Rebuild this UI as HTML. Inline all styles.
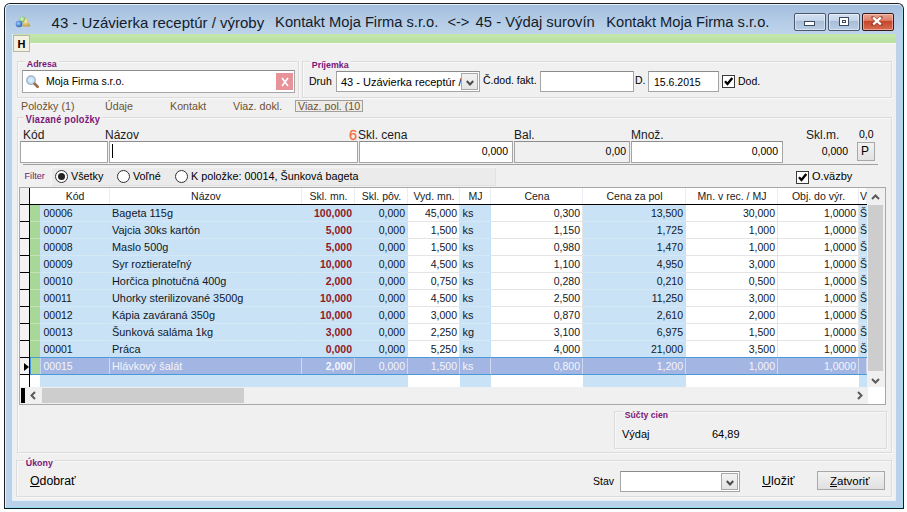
<!DOCTYPE html>
<html><head><meta charset="utf-8">
<style>
*{box-sizing:border-box;margin:0;padding:0}
html,body{width:907px;height:512px;overflow:hidden;background:#fefefe;font-family:"Liberation Sans",sans-serif;color:#000}
.a{position:absolute}
svg{display:block}
.t{position:absolute;white-space:nowrap;line-height:1}
#win{left:4px;top:3px;width:900px;height:506px;border:1px solid #1a1e22;border-bottom-color:#0a1a1a;border-radius:6px 6px 0 0;background:#b9d1ea;overflow:hidden}
#winin{left:0;top:0;width:898px;height:504px;border:1px solid #eaf2fa;border-bottom-color:#94dcf4;border-right-color:#a8d8ee;border-radius:5px 5px 0 0;
 background:linear-gradient(#a3bede 0px,#b2cae4 14px,#bcd3ea 28px,#bad1ea 100%)}
#client{left:12px;top:34px;width:884px;height:467px;background:#f0f0f0;border-bottom:1px solid #e6eef6;border-left:1px solid #e4f0f8}
.grp{position:absolute;border:1px solid #dcdcdc;box-shadow:inset 1px 1px 0 #f8f8f8, 1px 1px 0 #f8f8f8}
.glab{position:absolute;font-weight:bold;font-size:9.6px;color:#7a167a;background:#f0f0f0;padding:0 2px;line-height:10px;white-space:nowrap;transform:scaleX(0.92);transform-origin:0 0}
.inp{position:absolute;background:#fff;border:1px solid #a5a5a5;border-top-color:#8c8c8c}
.lbl{position:absolute;font-size:10.5px;white-space:nowrap;line-height:1}
.big{position:absolute;font-size:12px;white-space:nowrap;line-height:1;color:#1a1a1a}
.g{position:absolute;font-size:10.5px;white-space:nowrap;line-height:1;color:#101828}
.gr{text-align:right}
</style></head><body>
<div id="win" class="a"><div id="winin" class="a"></div></div>
<div class="a" style="left:15px;top:15px;width:16px;height:14px"><svg width="16" height="14" viewBox="0 0 16 14"><defs><radialGradient id="gb" cx="0.4" cy="0.4" r="0.6"><stop offset="0" stop-color="#9fd0ff"/><stop offset="1" stop-color="#2a64b0"/></radialGradient><radialGradient id="gy" cx="0.4" cy="0.4" r="0.6"><stop offset="0" stop-color="#fff0b0"/><stop offset="1" stop-color="#c8a040"/></radialGradient><radialGradient id="gg" cx="0.4" cy="0.4" r="0.6"><stop offset="0" stop-color="#e0ffd0"/><stop offset="1" stop-color="#70b060"/></radialGradient></defs><circle cx="7.5" cy="4.5" r="3" fill="url(#gg)"/><circle cx="4" cy="9" r="3.3" fill="url(#gb)"/><path d="M11 2.5 L15.5 11.5 L7 11.5 Z" fill="url(#gy)"/></svg></div>
<div class="t" style="left:51.6px;top:15px;font-size:15px;color:#141c2c">43 - Uzávierka receptúr / výroby</div>
<div class="t" style="left:275.1px;top:15px;font-size:14.7px;color:#141c2c">Kontakt Moja Firma s.r.o.</div>
<div class="t" style="left:447.4px;top:15px;font-size:14.7px;color:#141c2c">&lt;-&gt;</div>
<div class="t" style="left:475.6px;top:15px;font-size:14.8px;color:#141c2c">45 - Výdaj surovín</div>
<div class="t" style="left:606.2px;top:15px;font-size:14.7px;color:#141c2c">Kontakt Moja Firma s.r.o.</div>
<div class="a" style="left:794px;top:13px;width:32px;height:18px;border:1px solid #4a5870;border-radius:2px;box-shadow:inset 0 0 0 1px rgba(255,255,255,0.45);background:linear-gradient(#d3e0f0 0,#c6d6ea 40%,#a8bed8 45%,#b8cce4 100%)"></div>
<div class="a" style="left:804px;top:21px;width:11px;height:5px;background:#fff;border:1px solid #3a4a60"></div>
<div class="a" style="left:828px;top:13px;width:32px;height:18px;border:1px solid #4a5870;border-radius:2px;box-shadow:inset 0 0 0 1px rgba(255,255,255,0.45);background:linear-gradient(#d3e0f0 0,#c6d6ea 40%,#a8bed8 45%,#b8cce4 100%)"></div>
<div class="a" style="left:839px;top:17px;width:10px;height:9px;background:#fff;border:1px solid #3a4a60"><div class="a" style="left:2px;top:2px;width:4px;height:3px;border:1px solid #3a4a60"></div></div>
<div class="a" style="left:862px;top:13px;width:32px;height:18px;border:1px solid #3a1a18;border-radius:2px;box-shadow:inset 0 0 0 1px rgba(255,220,210,0.5);background:linear-gradient(#eaa595 0,#e0806a 40%,#c6442a 45%,#d86c52 100%)"></div>
<div class="a" style="left:871px;top:16px"><svg width="12" height="10" viewBox="0 0 12 10"><path d="M2 1.5 L10 8.5 M10 1.5 L2 8.5" stroke="#7a3a2a" stroke-width="3.6" stroke-linecap="square" opacity="0.55"/><path d="M2.2 1.7 L9.8 8.3 M9.8 1.7 L2.2 8.3" stroke="#fff" stroke-width="2.2"/></svg></div>
<div id="client" class="a"></div>
<div class="a" style="left:13px;top:34px;width:883px;height:9px;background:linear-gradient(#c4e6ac,#bae0a2)"></div>
<div class="a" style="left:13px;top:43px;width:883px;height:1px;background:#f6f8f2"></div>
<div class="a" style="left:13px;top:35px;width:17px;height:17px;background:#f3f1e0;border:1px solid #b8b8a8"></div>
<div class="t" style="left:17.5px;top:39px;font-size:11px;font-weight:bold">H</div>
<div class="grp" style="left:17px;top:61px;width:282px;height:37px"></div>
<div class="glab" style="left:25px;top:58.5px">Adresa</div>
<div class="inp" style="left:22px;top:70px;width:273px;height:23px"></div>
<div class="a" style="left:26px;top:75px"><svg width="14" height="14" viewBox="0 0 14 14"><defs><radialGradient id="lens" cx="0.5" cy="0.5" r="0.5"><stop offset="0" stop-color="#e8f4ff"/><stop offset="1" stop-color="#b8d4f0"/></radialGradient></defs><circle cx="5" cy="5.2" r="4.3" fill="url(#lens)" stroke="#9ab2ca" stroke-width="1.2"/><path d="M8.6 8.8 L11.6 11.8" stroke="#9a7048" stroke-width="2.8" stroke-linecap="round"/></svg></div>
<div class="lbl" style="left:46px;top:76px">Moja Firma s.r.o.</div>
<div class="a" style="left:276px;top:73px;width:17px;height:17px;background:#e8929a"></div>
<div class="a" style="left:281px;top:77px"><svg width="8" height="10" viewBox="0 0 8 10"><path d="M1 1 L7 9 M7 1 L1 9" stroke="#fff" stroke-width="1.6"/></svg></div>
<div class="grp" style="left:302px;top:61px;width:590px;height:37px"></div>
<div class="glab" style="left:310px;top:60px">Príjemka</div>
<div class="lbl" style="left:309px;top:76px">Druh</div>
<div class="inp" style="left:336px;top:71px;width:144px;height:21px;overflow:hidden"><div class="t" style="left:4px;top:5px;font-size:11px">43 - Uzávierka receptúr /</div></div>
<div class="a" style="left:461px;top:73px;width:17px;height:17px;background:linear-gradient(#f2f2f2,#e4e4e4);border:1px solid #a8a8a8"></div><div class="a" style="left:466px;top:80px"><svg width="8" height="6" viewBox="0 0 8 6"><path d="M0.8 1 L4 4.5 L7.2 1" fill="none" stroke="#4a4a4a" stroke-width="2"/></svg></div>
<div class="lbl" style="left:483px;top:75px">Č.dod. fakt.</div>
<div class="inp" style="left:540px;top:71px;width:94px;height:21px"></div>
<div class="lbl" style="left:635px;top:75px">D.</div>
<div class="inp" style="left:648px;top:71px;width:71px;height:21px"></div>
<div class="lbl" style="left:654px;top:77px">15.6.2015</div>
<div class="a" style="left:722px;top:75px;width:13px;height:13px;background:#fff;border:1px solid #3a3a3a"></div><div class="a" style="left:724px;top:77px"><svg width="9" height="9" viewBox="0 0 9 9"><path d="M1 4.3 L3.5 7 L8.3 1" fill="none" stroke="#000" stroke-width="2.4"/></svg></div>
<div class="lbl" style="left:738px;top:76px">Dod.</div>
<div class="lbl" style="left:21px;top:101px;color:#6e5030;font-size:10.7px">Položky (1)</div>
<div class="lbl" style="left:105px;top:101px;color:#6e5030;font-size:10.7px">Údaje</div>
<div class="lbl" style="left:170px;top:101px;color:#6e5030;font-size:10.7px">Kontakt</div>
<div class="lbl" style="left:233px;top:101px;color:#6e5030;font-size:10.7px">Viaz. dokl.</div>
<div class="a" style="left:295px;top:100px;width:68px;height:12px;border:1px solid #a0a0a0;background:#eeebe6;overflow:hidden"><div class="lbl" style="left:2px;top:0px;color:#6e5030;font-size:10.7px">Viaz. pol. (10</div></div>
<div class="grp" style="left:17px;top:117px;width:875px;height:336px"></div>
<div class="glab" style="left:24px;top:114.5px;font-size:10px;letter-spacing:0.25px">Viazané položky</div>
<div class="big" style="left:23px;top:129px">Kód</div>
<div class="big" style="left:105px;top:129px">Názov</div>
<div class="big" style="left:358px;top:129px">Skl. cena</div>
<div class="big" style="left:514px;top:129px">Bal.</div>
<div class="big" style="left:631px;top:129px">Množ.</div>
<div class="big" style="left:806px;top:129px">Skl.m.</div>
<div class="t" style="left:349px;top:127.5px;font-size:14.6px;color:#f07048;-webkit-text-stroke:0.3px #f07048">6</div>
<div class="lbl" style="left:859px;top:129px">0,0</div>
<div class="inp" style="left:20px;top:141px;width:88px;height:22px"></div>
<div class="inp" style="left:109px;top:141px;width:249px;height:22px"></div>
<div class="a" style="left:112px;top:144px;width:1px;height:14px;background:#000"></div>
<div class="inp" style="left:359px;top:141px;width:154px;height:22px"></div>
<div class="lbl" style="left:359px;top:146px;width:149px;text-align:right">0,000</div>
<div class="inp" style="left:514px;top:141px;width:116px;height:22px;background:#f0f0f0"></div>
<div class="lbl" style="left:514px;top:146px;width:112px;text-align:right">0,00</div>
<div class="inp" style="left:631px;top:141px;width:152px;height:22px"></div>
<div class="lbl" style="left:631px;top:146px;width:147px;text-align:right">0,000</div>
<div class="lbl" style="left:790px;top:146px;width:58px;text-align:right">0,000</div>
<div class="a" style="left:857px;top:142px;width:18px;height:19px;background:linear-gradient(#f2f2f2,#e2e2e2);border:1px solid #a8a8a8"></div>
<div class="t" style="left:861px;top:145px;font-size:12px">P</div>
<div class="a" style="left:23px;top:164px;width:855px;height:1px;background:#a0a0a0"></div>
<div class="t" style="left:24.5px;top:172px;font-size:9.2px;color:#6c1c6c">Filter</div>
<div class="a" style="left:51px;top:167px;width:445px;height:19px;background:#ebebeb;border:1px solid #e2e2e2;border-top-color:#f6f6f6;border-left-color:#f6f6f6"></div>
<div class="a" style="left:55px;top:170px;width:13px;height:13px;border-radius:50%;background:#fff;border:1.4px solid #303030"></div>
<div class="a" style="left:58px;top:173px;width:7px;height:7px;border-radius:50%;background:#222"></div>
<div class="t" style="left:71px;top:171px;font-size:10.8px">Všetky</div>
<div class="a" style="left:117px;top:170px;width:13px;height:13px;border-radius:50%;background:#fff;border:1.4px solid #303030"></div>
<div class="t" style="left:133px;top:171px;font-size:10.8px">Voľné</div>
<div class="a" style="left:175px;top:170px;width:13px;height:13px;border-radius:50%;background:#fff;border:1.4px solid #303030"></div>
<div class="t" style="left:191px;top:171px;font-size:10.8px">K položke: 00014, Šunková bageta</div>
<div class="a" style="left:796px;top:171px;width:13px;height:13px;background:#fff;border:1px solid #3a3a3a"></div><div class="a" style="left:798px;top:173px"><svg width="9" height="9" viewBox="0 0 9 9"><path d="M1 4.3 L3.5 7 L8.3 1" fill="none" stroke="#000" stroke-width="2.4"/></svg></div>
<div class="t" style="left:812px;top:171px;font-size:11px">O.väzby</div>
<div class="a" style="left:19px;top:187px;width:867px;height:218px;border:1px solid #a8a8a8;background:#fff"></div>
<div class="a" style="left:20px;top:188px;width:9px;height:16px;background:#f0f0f0"></div>
<div class="a" style="left:40px;top:188px;width:70px;height:16px;border-right:1px solid #e8eef4"></div>
<div class="g" style="left:40px;top:191px;width:70px;text-align:center;color:#1a1a1a">Kód</div>
<div class="a" style="left:110px;top:188px;width:192px;height:16px;border-right:1px solid #e8eef4"></div>
<div class="g" style="left:110px;top:191px;width:192px;text-align:center;color:#1a1a1a">Názov</div>
<div class="a" style="left:302px;top:188px;width:53px;height:16px;border-right:1px solid #e8eef4"></div>
<div class="g" style="left:302px;top:191px;width:53px;text-align:center;color:#1a1a1a">Skl. mn.</div>
<div class="a" style="left:355px;top:188px;width:53px;height:16px;border-right:1px solid #e8eef4"></div>
<div class="g" style="left:355px;top:191px;width:53px;text-align:center;color:#1a1a1a">Skl. pôv.</div>
<div class="a" style="left:408px;top:188px;width:52px;height:16px;border-right:1px solid #e8eef4"></div>
<div class="g" style="left:408px;top:191px;width:52px;text-align:center;color:#1a1a1a">Vyd. mn.</div>
<div class="a" style="left:460px;top:188px;width:31px;height:16px;border-right:1px solid #e8eef4"></div>
<div class="g" style="left:460px;top:191px;width:31px;text-align:center;color:#1a1a1a">MJ</div>
<div class="a" style="left:491px;top:188px;width:92px;height:16px;border-right:1px solid #e8eef4"></div>
<div class="g" style="left:491px;top:191px;width:92px;text-align:center;color:#1a1a1a">Cena</div>
<div class="a" style="left:583px;top:188px;width:103px;height:16px;border-right:1px solid #e8eef4"></div>
<div class="g" style="left:583px;top:191px;width:103px;text-align:center;color:#1a1a1a">Cena za pol</div>
<div class="a" style="left:686px;top:188px;width:92px;height:16px;border-right:1px solid #e8eef4"></div>
<div class="g" style="left:686px;top:191px;width:92px;text-align:center;color:#1a1a1a">Mn. v rec. / MJ</div>
<div class="a" style="left:778px;top:188px;width:81px;height:16px;border-right:1px solid #e8eef4"></div>
<div class="g" style="left:778px;top:191px;width:81px;text-align:center;color:#1a1a1a">Obj. do výr.</div>
<div class="a" style="left:859px;top:188px;width:8px;height:16px;border-right:1px solid #e8eef4"></div>
<div class="g" style="left:860px;top:191px">V</div>
<div class="a" style="left:20px;top:204px;width:847px;height:1px;background:#000"></div>
<div class="a" style="left:20px;top:205px;width:9px;height:16px;background:#f4f2f2"></div>
<div class="a" style="left:20px;top:221px;width:9px;height:1px;background:#000"></div>
<div class="a" style="left:30px;top:205px;width:10px;height:17px;background:#a8d898;border-bottom:1px solid #c4e4b8"></div>
<div class="a" style="left:40px;top:205px;width:70px;height:17px;background:#c9e2f5;border-right:1px solid #c6e0f4;border-bottom:1px solid #d4e8f6"></div>
<div class="g" style="left:43.5px;top:208px;color:#101828;font-weight:normal;font-size:10.5px">00006</div>
<div class="a" style="left:110px;top:205px;width:192px;height:17px;background:#c9e2f5;border-right:1px solid #c6e0f4;border-bottom:1px solid #d4e8f6"></div>
<div class="g" style="left:112px;top:208px;color:#101828;font-weight:normal;font-size:10.9px">Bageta 115g</div>
<div class="a" style="left:302px;top:205px;width:53px;height:17px;background:#c9e2f5;border-right:1px solid #c6e0f4;border-bottom:1px solid #d4e8f6"></div>
<div class="g" style="left:302px;top:208px;width:50px;text-align:right;color:#901828;font-weight:bold">100,000</div>
<div class="a" style="left:355px;top:205px;width:53px;height:17px;background:#c9e2f5;border-right:1px solid #c6e0f4;border-bottom:1px solid #d4e8f6"></div>
<div class="g" style="left:355px;top:208px;width:50px;text-align:right;color:#101828;font-weight:normal">0,000</div>
<div class="a" style="left:408px;top:205px;width:52px;height:17px;background:#ffffff;border-right:1px solid #e4e4e4;border-bottom:1px solid #e4e4e4"></div>
<div class="g" style="left:408px;top:208px;width:49px;text-align:right;color:#101828;font-weight:normal">45,000</div>
<div class="a" style="left:460px;top:205px;width:31px;height:17px;background:#c9e2f5;border-right:1px solid #c6e0f4;border-bottom:1px solid #d4e8f6"></div>
<div class="g" style="left:462.5px;top:208px;color:#101828;font-weight:normal;font-size:10.9px">ks</div>
<div class="a" style="left:491px;top:205px;width:92px;height:17px;background:#ffffff;border-right:1px solid #e4e4e4;border-bottom:1px solid #e4e4e4"></div>
<div class="g" style="left:491px;top:208px;width:89px;text-align:right;color:#101828;font-weight:normal">0,300</div>
<div class="a" style="left:583px;top:205px;width:103px;height:17px;background:#c9e2f5;border-right:1px solid #c6e0f4;border-bottom:1px solid #d4e8f6"></div>
<div class="g" style="left:583px;top:208px;width:100px;text-align:right;color:#101828;font-weight:normal">13,500</div>
<div class="a" style="left:686px;top:205px;width:92px;height:17px;background:#ffffff;border-right:1px solid #e4e4e4;border-bottom:1px solid #e4e4e4"></div>
<div class="g" style="left:686px;top:208px;width:89px;text-align:right;color:#101828;font-weight:normal">30,000</div>
<div class="a" style="left:778px;top:205px;width:81px;height:17px;background:#ffffff;border-right:1px solid #e4e4e4;border-bottom:1px solid #e4e4e4"></div>
<div class="g" style="left:778px;top:208px;width:78px;text-align:right;color:#101828;font-weight:normal">1,0000</div>
<div class="a" style="left:859px;top:205px;width:8px;height:17px;background:#c9e2f5;border-right:1px solid #c6e0f4;border-bottom:1px solid #d4e8f6"></div>
<div class="g" style="left:860px;top:208px">Š</div>
<div class="a" style="left:20px;top:222px;width:9px;height:16px;background:#f4f2f2"></div>
<div class="a" style="left:20px;top:238px;width:9px;height:1px;background:#000"></div>
<div class="a" style="left:30px;top:222px;width:10px;height:17px;background:#a8d898;border-bottom:1px solid #c4e4b8"></div>
<div class="a" style="left:40px;top:222px;width:70px;height:17px;background:#c9e2f5;border-right:1px solid #c6e0f4;border-bottom:1px solid #d4e8f6"></div>
<div class="g" style="left:43.5px;top:225px;color:#101828;font-weight:normal;font-size:10.5px">00007</div>
<div class="a" style="left:110px;top:222px;width:192px;height:17px;background:#c9e2f5;border-right:1px solid #c6e0f4;border-bottom:1px solid #d4e8f6"></div>
<div class="g" style="left:112px;top:225px;color:#101828;font-weight:normal;font-size:10.9px">Vajcia 30ks kartón</div>
<div class="a" style="left:302px;top:222px;width:53px;height:17px;background:#c9e2f5;border-right:1px solid #c6e0f4;border-bottom:1px solid #d4e8f6"></div>
<div class="g" style="left:302px;top:225px;width:50px;text-align:right;color:#901828;font-weight:bold">5,000</div>
<div class="a" style="left:355px;top:222px;width:53px;height:17px;background:#c9e2f5;border-right:1px solid #c6e0f4;border-bottom:1px solid #d4e8f6"></div>
<div class="g" style="left:355px;top:225px;width:50px;text-align:right;color:#101828;font-weight:normal">0,000</div>
<div class="a" style="left:408px;top:222px;width:52px;height:17px;background:#ffffff;border-right:1px solid #e4e4e4;border-bottom:1px solid #e4e4e4"></div>
<div class="g" style="left:408px;top:225px;width:49px;text-align:right;color:#101828;font-weight:normal">1,500</div>
<div class="a" style="left:460px;top:222px;width:31px;height:17px;background:#c9e2f5;border-right:1px solid #c6e0f4;border-bottom:1px solid #d4e8f6"></div>
<div class="g" style="left:462.5px;top:225px;color:#101828;font-weight:normal;font-size:10.9px">ks</div>
<div class="a" style="left:491px;top:222px;width:92px;height:17px;background:#ffffff;border-right:1px solid #e4e4e4;border-bottom:1px solid #e4e4e4"></div>
<div class="g" style="left:491px;top:225px;width:89px;text-align:right;color:#101828;font-weight:normal">1,150</div>
<div class="a" style="left:583px;top:222px;width:103px;height:17px;background:#c9e2f5;border-right:1px solid #c6e0f4;border-bottom:1px solid #d4e8f6"></div>
<div class="g" style="left:583px;top:225px;width:100px;text-align:right;color:#101828;font-weight:normal">1,725</div>
<div class="a" style="left:686px;top:222px;width:92px;height:17px;background:#ffffff;border-right:1px solid #e4e4e4;border-bottom:1px solid #e4e4e4"></div>
<div class="g" style="left:686px;top:225px;width:89px;text-align:right;color:#101828;font-weight:normal">1,000</div>
<div class="a" style="left:778px;top:222px;width:81px;height:17px;background:#ffffff;border-right:1px solid #e4e4e4;border-bottom:1px solid #e4e4e4"></div>
<div class="g" style="left:778px;top:225px;width:78px;text-align:right;color:#101828;font-weight:normal">1,0000</div>
<div class="a" style="left:859px;top:222px;width:8px;height:17px;background:#c9e2f5;border-right:1px solid #c6e0f4;border-bottom:1px solid #d4e8f6"></div>
<div class="g" style="left:860px;top:225px">Š</div>
<div class="a" style="left:20px;top:239px;width:9px;height:16px;background:#f4f2f2"></div>
<div class="a" style="left:20px;top:255px;width:9px;height:1px;background:#000"></div>
<div class="a" style="left:30px;top:239px;width:10px;height:17px;background:#a8d898;border-bottom:1px solid #c4e4b8"></div>
<div class="a" style="left:40px;top:239px;width:70px;height:17px;background:#c9e2f5;border-right:1px solid #c6e0f4;border-bottom:1px solid #d4e8f6"></div>
<div class="g" style="left:43.5px;top:242px;color:#101828;font-weight:normal;font-size:10.5px">00008</div>
<div class="a" style="left:110px;top:239px;width:192px;height:17px;background:#c9e2f5;border-right:1px solid #c6e0f4;border-bottom:1px solid #d4e8f6"></div>
<div class="g" style="left:112px;top:242px;color:#101828;font-weight:normal;font-size:10.9px">Maslo 500g</div>
<div class="a" style="left:302px;top:239px;width:53px;height:17px;background:#c9e2f5;border-right:1px solid #c6e0f4;border-bottom:1px solid #d4e8f6"></div>
<div class="g" style="left:302px;top:242px;width:50px;text-align:right;color:#901828;font-weight:bold">5,000</div>
<div class="a" style="left:355px;top:239px;width:53px;height:17px;background:#c9e2f5;border-right:1px solid #c6e0f4;border-bottom:1px solid #d4e8f6"></div>
<div class="g" style="left:355px;top:242px;width:50px;text-align:right;color:#101828;font-weight:normal">0,000</div>
<div class="a" style="left:408px;top:239px;width:52px;height:17px;background:#ffffff;border-right:1px solid #e4e4e4;border-bottom:1px solid #e4e4e4"></div>
<div class="g" style="left:408px;top:242px;width:49px;text-align:right;color:#101828;font-weight:normal">1,500</div>
<div class="a" style="left:460px;top:239px;width:31px;height:17px;background:#c9e2f5;border-right:1px solid #c6e0f4;border-bottom:1px solid #d4e8f6"></div>
<div class="g" style="left:462.5px;top:242px;color:#101828;font-weight:normal;font-size:10.9px">ks</div>
<div class="a" style="left:491px;top:239px;width:92px;height:17px;background:#ffffff;border-right:1px solid #e4e4e4;border-bottom:1px solid #e4e4e4"></div>
<div class="g" style="left:491px;top:242px;width:89px;text-align:right;color:#101828;font-weight:normal">0,980</div>
<div class="a" style="left:583px;top:239px;width:103px;height:17px;background:#c9e2f5;border-right:1px solid #c6e0f4;border-bottom:1px solid #d4e8f6"></div>
<div class="g" style="left:583px;top:242px;width:100px;text-align:right;color:#101828;font-weight:normal">1,470</div>
<div class="a" style="left:686px;top:239px;width:92px;height:17px;background:#ffffff;border-right:1px solid #e4e4e4;border-bottom:1px solid #e4e4e4"></div>
<div class="g" style="left:686px;top:242px;width:89px;text-align:right;color:#101828;font-weight:normal">1,000</div>
<div class="a" style="left:778px;top:239px;width:81px;height:17px;background:#ffffff;border-right:1px solid #e4e4e4;border-bottom:1px solid #e4e4e4"></div>
<div class="g" style="left:778px;top:242px;width:78px;text-align:right;color:#101828;font-weight:normal">1,0000</div>
<div class="a" style="left:859px;top:239px;width:8px;height:17px;background:#c9e2f5;border-right:1px solid #c6e0f4;border-bottom:1px solid #d4e8f6"></div>
<div class="g" style="left:860px;top:242px">Š</div>
<div class="a" style="left:20px;top:256px;width:9px;height:16px;background:#f4f2f2"></div>
<div class="a" style="left:20px;top:272px;width:9px;height:1px;background:#000"></div>
<div class="a" style="left:30px;top:256px;width:10px;height:17px;background:#a8d898;border-bottom:1px solid #c4e4b8"></div>
<div class="a" style="left:40px;top:256px;width:70px;height:17px;background:#c9e2f5;border-right:1px solid #c6e0f4;border-bottom:1px solid #d4e8f6"></div>
<div class="g" style="left:43.5px;top:259px;color:#101828;font-weight:normal;font-size:10.5px">00009</div>
<div class="a" style="left:110px;top:256px;width:192px;height:17px;background:#c9e2f5;border-right:1px solid #c6e0f4;border-bottom:1px solid #d4e8f6"></div>
<div class="g" style="left:112px;top:259px;color:#101828;font-weight:normal;font-size:10.9px">Syr roztierateľný</div>
<div class="a" style="left:302px;top:256px;width:53px;height:17px;background:#c9e2f5;border-right:1px solid #c6e0f4;border-bottom:1px solid #d4e8f6"></div>
<div class="g" style="left:302px;top:259px;width:50px;text-align:right;color:#901828;font-weight:bold">10,000</div>
<div class="a" style="left:355px;top:256px;width:53px;height:17px;background:#c9e2f5;border-right:1px solid #c6e0f4;border-bottom:1px solid #d4e8f6"></div>
<div class="g" style="left:355px;top:259px;width:50px;text-align:right;color:#101828;font-weight:normal">0,000</div>
<div class="a" style="left:408px;top:256px;width:52px;height:17px;background:#ffffff;border-right:1px solid #e4e4e4;border-bottom:1px solid #e4e4e4"></div>
<div class="g" style="left:408px;top:259px;width:49px;text-align:right;color:#101828;font-weight:normal">4,500</div>
<div class="a" style="left:460px;top:256px;width:31px;height:17px;background:#c9e2f5;border-right:1px solid #c6e0f4;border-bottom:1px solid #d4e8f6"></div>
<div class="g" style="left:462.5px;top:259px;color:#101828;font-weight:normal;font-size:10.9px">ks</div>
<div class="a" style="left:491px;top:256px;width:92px;height:17px;background:#ffffff;border-right:1px solid #e4e4e4;border-bottom:1px solid #e4e4e4"></div>
<div class="g" style="left:491px;top:259px;width:89px;text-align:right;color:#101828;font-weight:normal">1,100</div>
<div class="a" style="left:583px;top:256px;width:103px;height:17px;background:#c9e2f5;border-right:1px solid #c6e0f4;border-bottom:1px solid #d4e8f6"></div>
<div class="g" style="left:583px;top:259px;width:100px;text-align:right;color:#101828;font-weight:normal">4,950</div>
<div class="a" style="left:686px;top:256px;width:92px;height:17px;background:#ffffff;border-right:1px solid #e4e4e4;border-bottom:1px solid #e4e4e4"></div>
<div class="g" style="left:686px;top:259px;width:89px;text-align:right;color:#101828;font-weight:normal">3,000</div>
<div class="a" style="left:778px;top:256px;width:81px;height:17px;background:#ffffff;border-right:1px solid #e4e4e4;border-bottom:1px solid #e4e4e4"></div>
<div class="g" style="left:778px;top:259px;width:78px;text-align:right;color:#101828;font-weight:normal">1,0000</div>
<div class="a" style="left:859px;top:256px;width:8px;height:17px;background:#c9e2f5;border-right:1px solid #c6e0f4;border-bottom:1px solid #d4e8f6"></div>
<div class="g" style="left:860px;top:259px">Š</div>
<div class="a" style="left:20px;top:273px;width:9px;height:16px;background:#f4f2f2"></div>
<div class="a" style="left:20px;top:289px;width:9px;height:1px;background:#000"></div>
<div class="a" style="left:30px;top:273px;width:10px;height:17px;background:#a8d898;border-bottom:1px solid #c4e4b8"></div>
<div class="a" style="left:40px;top:273px;width:70px;height:17px;background:#c9e2f5;border-right:1px solid #c6e0f4;border-bottom:1px solid #d4e8f6"></div>
<div class="g" style="left:43.5px;top:276px;color:#101828;font-weight:normal;font-size:10.5px">00010</div>
<div class="a" style="left:110px;top:273px;width:192px;height:17px;background:#c9e2f5;border-right:1px solid #c6e0f4;border-bottom:1px solid #d4e8f6"></div>
<div class="g" style="left:112px;top:276px;color:#101828;font-weight:normal;font-size:10.9px">Horčica plnotučná 400g</div>
<div class="a" style="left:302px;top:273px;width:53px;height:17px;background:#c9e2f5;border-right:1px solid #c6e0f4;border-bottom:1px solid #d4e8f6"></div>
<div class="g" style="left:302px;top:276px;width:50px;text-align:right;color:#901828;font-weight:bold">2,000</div>
<div class="a" style="left:355px;top:273px;width:53px;height:17px;background:#c9e2f5;border-right:1px solid #c6e0f4;border-bottom:1px solid #d4e8f6"></div>
<div class="g" style="left:355px;top:276px;width:50px;text-align:right;color:#101828;font-weight:normal">0,000</div>
<div class="a" style="left:408px;top:273px;width:52px;height:17px;background:#ffffff;border-right:1px solid #e4e4e4;border-bottom:1px solid #e4e4e4"></div>
<div class="g" style="left:408px;top:276px;width:49px;text-align:right;color:#101828;font-weight:normal">0,750</div>
<div class="a" style="left:460px;top:273px;width:31px;height:17px;background:#c9e2f5;border-right:1px solid #c6e0f4;border-bottom:1px solid #d4e8f6"></div>
<div class="g" style="left:462.5px;top:276px;color:#101828;font-weight:normal;font-size:10.9px">ks</div>
<div class="a" style="left:491px;top:273px;width:92px;height:17px;background:#ffffff;border-right:1px solid #e4e4e4;border-bottom:1px solid #e4e4e4"></div>
<div class="g" style="left:491px;top:276px;width:89px;text-align:right;color:#101828;font-weight:normal">0,280</div>
<div class="a" style="left:583px;top:273px;width:103px;height:17px;background:#c9e2f5;border-right:1px solid #c6e0f4;border-bottom:1px solid #d4e8f6"></div>
<div class="g" style="left:583px;top:276px;width:100px;text-align:right;color:#101828;font-weight:normal">0,210</div>
<div class="a" style="left:686px;top:273px;width:92px;height:17px;background:#ffffff;border-right:1px solid #e4e4e4;border-bottom:1px solid #e4e4e4"></div>
<div class="g" style="left:686px;top:276px;width:89px;text-align:right;color:#101828;font-weight:normal">0,500</div>
<div class="a" style="left:778px;top:273px;width:81px;height:17px;background:#ffffff;border-right:1px solid #e4e4e4;border-bottom:1px solid #e4e4e4"></div>
<div class="g" style="left:778px;top:276px;width:78px;text-align:right;color:#101828;font-weight:normal">1,0000</div>
<div class="a" style="left:859px;top:273px;width:8px;height:17px;background:#c9e2f5;border-right:1px solid #c6e0f4;border-bottom:1px solid #d4e8f6"></div>
<div class="g" style="left:860px;top:276px">Š</div>
<div class="a" style="left:20px;top:290px;width:9px;height:16px;background:#f4f2f2"></div>
<div class="a" style="left:20px;top:306px;width:9px;height:1px;background:#000"></div>
<div class="a" style="left:30px;top:290px;width:10px;height:17px;background:#a8d898;border-bottom:1px solid #c4e4b8"></div>
<div class="a" style="left:40px;top:290px;width:70px;height:17px;background:#c9e2f5;border-right:1px solid #c6e0f4;border-bottom:1px solid #d4e8f6"></div>
<div class="g" style="left:43.5px;top:293px;color:#101828;font-weight:normal;font-size:10.5px">00011</div>
<div class="a" style="left:110px;top:290px;width:192px;height:17px;background:#c9e2f5;border-right:1px solid #c6e0f4;border-bottom:1px solid #d4e8f6"></div>
<div class="g" style="left:112px;top:293px;color:#101828;font-weight:normal;font-size:10.9px">Uhorky sterilizované 3500g</div>
<div class="a" style="left:302px;top:290px;width:53px;height:17px;background:#c9e2f5;border-right:1px solid #c6e0f4;border-bottom:1px solid #d4e8f6"></div>
<div class="g" style="left:302px;top:293px;width:50px;text-align:right;color:#901828;font-weight:bold">10,000</div>
<div class="a" style="left:355px;top:290px;width:53px;height:17px;background:#c9e2f5;border-right:1px solid #c6e0f4;border-bottom:1px solid #d4e8f6"></div>
<div class="g" style="left:355px;top:293px;width:50px;text-align:right;color:#101828;font-weight:normal">0,000</div>
<div class="a" style="left:408px;top:290px;width:52px;height:17px;background:#ffffff;border-right:1px solid #e4e4e4;border-bottom:1px solid #e4e4e4"></div>
<div class="g" style="left:408px;top:293px;width:49px;text-align:right;color:#101828;font-weight:normal">4,500</div>
<div class="a" style="left:460px;top:290px;width:31px;height:17px;background:#c9e2f5;border-right:1px solid #c6e0f4;border-bottom:1px solid #d4e8f6"></div>
<div class="g" style="left:462.5px;top:293px;color:#101828;font-weight:normal;font-size:10.9px">ks</div>
<div class="a" style="left:491px;top:290px;width:92px;height:17px;background:#ffffff;border-right:1px solid #e4e4e4;border-bottom:1px solid #e4e4e4"></div>
<div class="g" style="left:491px;top:293px;width:89px;text-align:right;color:#101828;font-weight:normal">2,500</div>
<div class="a" style="left:583px;top:290px;width:103px;height:17px;background:#c9e2f5;border-right:1px solid #c6e0f4;border-bottom:1px solid #d4e8f6"></div>
<div class="g" style="left:583px;top:293px;width:100px;text-align:right;color:#101828;font-weight:normal">11,250</div>
<div class="a" style="left:686px;top:290px;width:92px;height:17px;background:#ffffff;border-right:1px solid #e4e4e4;border-bottom:1px solid #e4e4e4"></div>
<div class="g" style="left:686px;top:293px;width:89px;text-align:right;color:#101828;font-weight:normal">3,000</div>
<div class="a" style="left:778px;top:290px;width:81px;height:17px;background:#ffffff;border-right:1px solid #e4e4e4;border-bottom:1px solid #e4e4e4"></div>
<div class="g" style="left:778px;top:293px;width:78px;text-align:right;color:#101828;font-weight:normal">1,0000</div>
<div class="a" style="left:859px;top:290px;width:8px;height:17px;background:#c9e2f5;border-right:1px solid #c6e0f4;border-bottom:1px solid #d4e8f6"></div>
<div class="g" style="left:860px;top:293px">Š</div>
<div class="a" style="left:20px;top:307px;width:9px;height:16px;background:#f4f2f2"></div>
<div class="a" style="left:20px;top:323px;width:9px;height:1px;background:#000"></div>
<div class="a" style="left:30px;top:307px;width:10px;height:17px;background:#a8d898;border-bottom:1px solid #c4e4b8"></div>
<div class="a" style="left:40px;top:307px;width:70px;height:17px;background:#c9e2f5;border-right:1px solid #c6e0f4;border-bottom:1px solid #d4e8f6"></div>
<div class="g" style="left:43.5px;top:310px;color:#101828;font-weight:normal;font-size:10.5px">00012</div>
<div class="a" style="left:110px;top:307px;width:192px;height:17px;background:#c9e2f5;border-right:1px solid #c6e0f4;border-bottom:1px solid #d4e8f6"></div>
<div class="g" style="left:112px;top:310px;color:#101828;font-weight:normal;font-size:10.9px">Kápia zaváraná 350g</div>
<div class="a" style="left:302px;top:307px;width:53px;height:17px;background:#c9e2f5;border-right:1px solid #c6e0f4;border-bottom:1px solid #d4e8f6"></div>
<div class="g" style="left:302px;top:310px;width:50px;text-align:right;color:#901828;font-weight:bold">10,000</div>
<div class="a" style="left:355px;top:307px;width:53px;height:17px;background:#c9e2f5;border-right:1px solid #c6e0f4;border-bottom:1px solid #d4e8f6"></div>
<div class="g" style="left:355px;top:310px;width:50px;text-align:right;color:#101828;font-weight:normal">0,000</div>
<div class="a" style="left:408px;top:307px;width:52px;height:17px;background:#ffffff;border-right:1px solid #e4e4e4;border-bottom:1px solid #e4e4e4"></div>
<div class="g" style="left:408px;top:310px;width:49px;text-align:right;color:#101828;font-weight:normal">3,000</div>
<div class="a" style="left:460px;top:307px;width:31px;height:17px;background:#c9e2f5;border-right:1px solid #c6e0f4;border-bottom:1px solid #d4e8f6"></div>
<div class="g" style="left:462.5px;top:310px;color:#101828;font-weight:normal;font-size:10.9px">ks</div>
<div class="a" style="left:491px;top:307px;width:92px;height:17px;background:#ffffff;border-right:1px solid #e4e4e4;border-bottom:1px solid #e4e4e4"></div>
<div class="g" style="left:491px;top:310px;width:89px;text-align:right;color:#101828;font-weight:normal">0,870</div>
<div class="a" style="left:583px;top:307px;width:103px;height:17px;background:#c9e2f5;border-right:1px solid #c6e0f4;border-bottom:1px solid #d4e8f6"></div>
<div class="g" style="left:583px;top:310px;width:100px;text-align:right;color:#101828;font-weight:normal">2,610</div>
<div class="a" style="left:686px;top:307px;width:92px;height:17px;background:#ffffff;border-right:1px solid #e4e4e4;border-bottom:1px solid #e4e4e4"></div>
<div class="g" style="left:686px;top:310px;width:89px;text-align:right;color:#101828;font-weight:normal">2,000</div>
<div class="a" style="left:778px;top:307px;width:81px;height:17px;background:#ffffff;border-right:1px solid #e4e4e4;border-bottom:1px solid #e4e4e4"></div>
<div class="g" style="left:778px;top:310px;width:78px;text-align:right;color:#101828;font-weight:normal">1,0000</div>
<div class="a" style="left:859px;top:307px;width:8px;height:17px;background:#c9e2f5;border-right:1px solid #c6e0f4;border-bottom:1px solid #d4e8f6"></div>
<div class="g" style="left:860px;top:310px">Š</div>
<div class="a" style="left:20px;top:324px;width:9px;height:16px;background:#f4f2f2"></div>
<div class="a" style="left:20px;top:340px;width:9px;height:1px;background:#000"></div>
<div class="a" style="left:30px;top:324px;width:10px;height:17px;background:#a8d898;border-bottom:1px solid #c4e4b8"></div>
<div class="a" style="left:40px;top:324px;width:70px;height:17px;background:#c9e2f5;border-right:1px solid #c6e0f4;border-bottom:1px solid #d4e8f6"></div>
<div class="g" style="left:43.5px;top:327px;color:#101828;font-weight:normal;font-size:10.5px">00013</div>
<div class="a" style="left:110px;top:324px;width:192px;height:17px;background:#c9e2f5;border-right:1px solid #c6e0f4;border-bottom:1px solid #d4e8f6"></div>
<div class="g" style="left:112px;top:327px;color:#101828;font-weight:normal;font-size:10.9px">Šunková saláma 1kg</div>
<div class="a" style="left:302px;top:324px;width:53px;height:17px;background:#c9e2f5;border-right:1px solid #c6e0f4;border-bottom:1px solid #d4e8f6"></div>
<div class="g" style="left:302px;top:327px;width:50px;text-align:right;color:#901828;font-weight:bold">3,000</div>
<div class="a" style="left:355px;top:324px;width:53px;height:17px;background:#c9e2f5;border-right:1px solid #c6e0f4;border-bottom:1px solid #d4e8f6"></div>
<div class="g" style="left:355px;top:327px;width:50px;text-align:right;color:#101828;font-weight:normal">0,000</div>
<div class="a" style="left:408px;top:324px;width:52px;height:17px;background:#ffffff;border-right:1px solid #e4e4e4;border-bottom:1px solid #e4e4e4"></div>
<div class="g" style="left:408px;top:327px;width:49px;text-align:right;color:#101828;font-weight:normal">2,250</div>
<div class="a" style="left:460px;top:324px;width:31px;height:17px;background:#c9e2f5;border-right:1px solid #c6e0f4;border-bottom:1px solid #d4e8f6"></div>
<div class="g" style="left:462.5px;top:327px;color:#101828;font-weight:normal;font-size:10.9px">kg</div>
<div class="a" style="left:491px;top:324px;width:92px;height:17px;background:#ffffff;border-right:1px solid #e4e4e4;border-bottom:1px solid #e4e4e4"></div>
<div class="g" style="left:491px;top:327px;width:89px;text-align:right;color:#101828;font-weight:normal">3,100</div>
<div class="a" style="left:583px;top:324px;width:103px;height:17px;background:#c9e2f5;border-right:1px solid #c6e0f4;border-bottom:1px solid #d4e8f6"></div>
<div class="g" style="left:583px;top:327px;width:100px;text-align:right;color:#101828;font-weight:normal">6,975</div>
<div class="a" style="left:686px;top:324px;width:92px;height:17px;background:#ffffff;border-right:1px solid #e4e4e4;border-bottom:1px solid #e4e4e4"></div>
<div class="g" style="left:686px;top:327px;width:89px;text-align:right;color:#101828;font-weight:normal">1,500</div>
<div class="a" style="left:778px;top:324px;width:81px;height:17px;background:#ffffff;border-right:1px solid #e4e4e4;border-bottom:1px solid #e4e4e4"></div>
<div class="g" style="left:778px;top:327px;width:78px;text-align:right;color:#101828;font-weight:normal">1,0000</div>
<div class="a" style="left:859px;top:324px;width:8px;height:17px;background:#c9e2f5;border-right:1px solid #c6e0f4;border-bottom:1px solid #d4e8f6"></div>
<div class="g" style="left:860px;top:327px">Š</div>
<div class="a" style="left:20px;top:341px;width:9px;height:16px;background:#f4f2f2"></div>
<div class="a" style="left:20px;top:357px;width:9px;height:1px;background:#000"></div>
<div class="a" style="left:30px;top:341px;width:10px;height:17px;background:#a8d898;border-bottom:1px solid #c4e4b8"></div>
<div class="a" style="left:40px;top:341px;width:70px;height:17px;background:#c9e2f5;border-right:1px solid #c6e0f4;border-bottom:1px solid #d4e8f6"></div>
<div class="g" style="left:43.5px;top:344px;color:#101828;font-weight:normal;font-size:10.5px">00001</div>
<div class="a" style="left:110px;top:341px;width:192px;height:17px;background:#c9e2f5;border-right:1px solid #c6e0f4;border-bottom:1px solid #d4e8f6"></div>
<div class="g" style="left:112px;top:344px;color:#101828;font-weight:normal;font-size:10.9px">Práca</div>
<div class="a" style="left:302px;top:341px;width:53px;height:17px;background:#c9e2f5;border-right:1px solid #c6e0f4;border-bottom:1px solid #d4e8f6"></div>
<div class="g" style="left:302px;top:344px;width:50px;text-align:right;color:#901828;font-weight:bold">0,000</div>
<div class="a" style="left:355px;top:341px;width:53px;height:17px;background:#c9e2f5;border-right:1px solid #c6e0f4;border-bottom:1px solid #d4e8f6"></div>
<div class="g" style="left:355px;top:344px;width:50px;text-align:right;color:#101828;font-weight:normal">0,000</div>
<div class="a" style="left:408px;top:341px;width:52px;height:17px;background:#ffffff;border-right:1px solid #e4e4e4;border-bottom:1px solid #e4e4e4"></div>
<div class="g" style="left:408px;top:344px;width:49px;text-align:right;color:#101828;font-weight:normal">5,250</div>
<div class="a" style="left:460px;top:341px;width:31px;height:17px;background:#c9e2f5;border-right:1px solid #c6e0f4;border-bottom:1px solid #d4e8f6"></div>
<div class="g" style="left:462.5px;top:344px;color:#101828;font-weight:normal;font-size:10.9px">ks</div>
<div class="a" style="left:491px;top:341px;width:92px;height:17px;background:#ffffff;border-right:1px solid #e4e4e4;border-bottom:1px solid #e4e4e4"></div>
<div class="g" style="left:491px;top:344px;width:89px;text-align:right;color:#101828;font-weight:normal">4,000</div>
<div class="a" style="left:583px;top:341px;width:103px;height:17px;background:#c9e2f5;border-right:1px solid #c6e0f4;border-bottom:1px solid #d4e8f6"></div>
<div class="g" style="left:583px;top:344px;width:100px;text-align:right;color:#101828;font-weight:normal">21,000</div>
<div class="a" style="left:686px;top:341px;width:92px;height:17px;background:#ffffff;border-right:1px solid #e4e4e4;border-bottom:1px solid #e4e4e4"></div>
<div class="g" style="left:686px;top:344px;width:89px;text-align:right;color:#101828;font-weight:normal">3,500</div>
<div class="a" style="left:778px;top:341px;width:81px;height:17px;background:#ffffff;border-right:1px solid #e4e4e4;border-bottom:1px solid #e4e4e4"></div>
<div class="g" style="left:778px;top:344px;width:78px;text-align:right;color:#101828;font-weight:normal">1,0000</div>
<div class="a" style="left:859px;top:341px;width:8px;height:17px;background:#c9e2f5;border-right:1px solid #c6e0f4;border-bottom:1px solid #d4e8f6"></div>
<div class="g" style="left:860px;top:344px">Š</div>
<div class="a" style="left:20px;top:358px;width:9px;height:16px;background:#f4f2f2"></div>
<div class="a" style="left:20px;top:374px;width:9px;height:1px;background:#000"></div>
<div class="a" style="left:30px;top:358px;width:10px;height:17px;background:#a8d898;border-bottom:1px solid #c4e4b8"></div>
<div class="a" style="left:30px;top:357px;width:837px;height:18px;border:1px solid #4a9ad8"></div>
<div class="a" style="left:40px;top:358px;width:826px;height:16px;background:#a3b5e2;border-left:1px solid #c8d4f0"></div>
<div class="a" style="left:24px;top:363px;width:0;height:0;border-left:5px solid #000;border-top:4px solid transparent;border-bottom:4px solid transparent"></div>
<div class="a" style="left:109px;top:358px;width:1px;height:16px;background:#d0d8f0"></div>
<div class="g" style="left:43.5px;top:361px;color:#f4f6fc;font-weight:normal;font-size:10.5px">00015</div>
<div class="a" style="left:301px;top:358px;width:1px;height:16px;background:#d0d8f0"></div>
<div class="g" style="left:112px;top:361px;color:#f4f6fc;font-weight:normal;font-size:10.9px">Hlávkový šalát</div>
<div class="a" style="left:354px;top:358px;width:1px;height:16px;background:#d0d8f0"></div>
<div class="g" style="left:302px;top:361px;width:50px;text-align:right;color:#f4f6fc;font-weight:bold">2,000</div>
<div class="a" style="left:407px;top:358px;width:1px;height:16px;background:#d0d8f0"></div>
<div class="g" style="left:355px;top:361px;width:50px;text-align:right;color:#f4f6fc;font-weight:normal">0,000</div>
<div class="a" style="left:459px;top:358px;width:1px;height:16px;background:#d0d8f0"></div>
<div class="g" style="left:408px;top:361px;width:49px;text-align:right;color:#f4f6fc;font-weight:normal">1,500</div>
<div class="a" style="left:490px;top:358px;width:1px;height:16px;background:#d0d8f0"></div>
<div class="g" style="left:462.5px;top:361px;color:#f4f6fc;font-weight:normal;font-size:10.9px">ks</div>
<div class="a" style="left:582px;top:358px;width:1px;height:16px;background:#d0d8f0"></div>
<div class="g" style="left:491px;top:361px;width:89px;text-align:right;color:#f4f6fc;font-weight:normal">0,800</div>
<div class="a" style="left:685px;top:358px;width:1px;height:16px;background:#d0d8f0"></div>
<div class="g" style="left:583px;top:361px;width:100px;text-align:right;color:#f4f6fc;font-weight:normal">1,200</div>
<div class="a" style="left:777px;top:358px;width:1px;height:16px;background:#d0d8f0"></div>
<div class="g" style="left:686px;top:361px;width:89px;text-align:right;color:#f4f6fc;font-weight:normal">1,000</div>
<div class="a" style="left:858px;top:358px;width:1px;height:16px;background:#d0d8f0"></div>
<div class="g" style="left:778px;top:361px;width:78px;text-align:right;color:#f4f6fc;font-weight:normal">1,0000</div>
<div class="a" style="left:866px;top:358px;width:1px;height:16px;background:#d0d8f0"></div>
<div class="a" style="left:20px;top:375px;width:20px;height:12px;background:#fff"></div>
<div class="a" style="left:40px;top:375px;width:70px;height:12px;background:#c9e2f5"></div>
<div class="a" style="left:110px;top:375px;width:192px;height:12px;background:#c9e2f5"></div>
<div class="a" style="left:302px;top:375px;width:53px;height:12px;background:#c9e2f5"></div>
<div class="a" style="left:355px;top:375px;width:53px;height:12px;background:#c9e2f5"></div>
<div class="a" style="left:408px;top:375px;width:52px;height:12px;background:#ffffff"></div>
<div class="a" style="left:460px;top:375px;width:31px;height:12px;background:#c9e2f5"></div>
<div class="a" style="left:491px;top:375px;width:92px;height:12px;background:#ffffff"></div>
<div class="a" style="left:583px;top:375px;width:103px;height:12px;background:#c9e2f5"></div>
<div class="a" style="left:686px;top:375px;width:92px;height:12px;background:#ffffff"></div>
<div class="a" style="left:778px;top:375px;width:81px;height:12px;background:#ffffff"></div>
<div class="a" style="left:859px;top:375px;width:8px;height:12px;background:#c9e2f5"></div>
<div class="a" style="left:29px;top:188px;width:1px;height:199px;background:#000"></div>
<div class="a" style="left:867px;top:188px;width:18px;height:199px;background:#f0f0f0"></div>
<div class="a" style="left:868px;top:205px;width:15px;height:166px;background:#cdcdcd"></div>
<div class="a" style="left:871px;top:194px"><svg width="9" height="6" viewBox="0 0 9 6"><path d="M1 5 L4.5 1.5 L8 5" fill="none" stroke="#5a5a5a" stroke-width="2"/></svg></div>
<div class="a" style="left:871px;top:378px"><svg width="9" height="6" viewBox="0 0 9 6"><path d="M1 1 L4.5 4.5 L8 1" fill="none" stroke="#5a5a5a" stroke-width="2"/></svg></div>
<div class="a" style="left:20px;top:387px;width:848px;height:17px;background:#f0f0f0"></div>
<div class="a" style="left:21px;top:388px;width:4px;height:15px;background:#000"></div>
<div class="a" style="left:42px;top:388px;width:202px;height:15px;background:#cdcdcd"></div>
<div class="a" style="left:30px;top:391px"><svg width="6" height="9" viewBox="0 0 6 9"><path d="M5 1 L1.5 4.5 L5 8" fill="none" stroke="#5a5a5a" stroke-width="2"/></svg></div>
<div class="a" style="left:857px;top:391px"><svg width="6" height="9" viewBox="0 0 6 9"><path d="M1 1 L4.5 4.5 L1 8" fill="none" stroke="#5a5a5a" stroke-width="2"/></svg></div>
<div class="a" style="left:868px;top:387px;width:17px;height:17px;background:#fff"></div>
<div class="grp" style="left:614px;top:411px;width:273px;height:38px"></div>
<div class="glab" style="left:623px;top:409.5px;font-size:9.4px">Súčty cien</div>
<div class="lbl" style="left:622px;top:429px;font-size:11px">Výdaj</div>
<div class="lbl" style="left:712px;top:429px;font-size:11px">64,89</div>
<div class="grp" style="left:16px;top:460px;width:876px;height:37px"></div>
<div class="glab" style="left:24px;top:457.5px">Úkony</div>
<div class="t" style="left:30px;top:475px;font-size:12.3px"><u>O</u>dobrať</div>
<div class="lbl" style="left:593px;top:476px">Stav</div>
<div class="inp" style="left:620px;top:471px;width:120px;height:21px"></div>
<div class="a" style="left:721px;top:473px;width:17px;height:17px;background:linear-gradient(#f2f2f2,#e4e4e4);border:1px solid #a8a8a8"></div><div class="a" style="left:726px;top:480px"><svg width="8" height="6" viewBox="0 0 8 6"><path d="M0.8 1 L4 4.5 L7.2 1" fill="none" stroke="#4a4a4a" stroke-width="2"/></svg></div>
<div class="t" style="left:762px;top:475px;font-size:12.5px"><u>U</u>ložiť</div>
<div class="a" style="left:817px;top:471px;width:68px;height:19px;background:linear-gradient(#f2f2f2,#e0e0e0);border:1px solid #a8a8a8"></div>
<div class="t" style="left:830px;top:476px;font-size:11.5px"><u>Z</u>atvoriť</div>
</body></html>
